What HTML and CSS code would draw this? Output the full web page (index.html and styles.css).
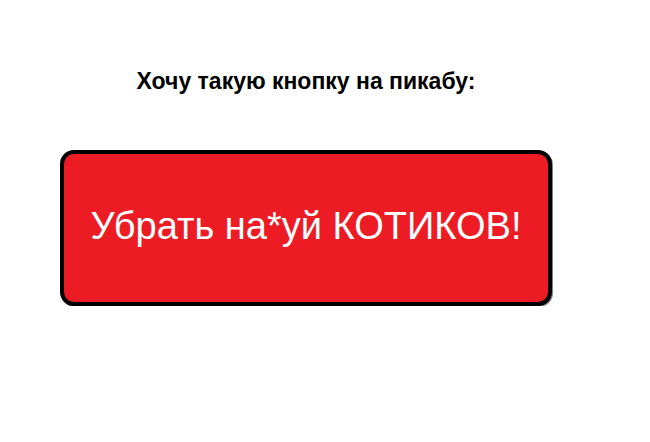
FILE: index.html
```html
<!DOCTYPE html>
<html lang="ru">
<head>
    <meta charset="UTF-8">
    <meta name="viewport" content="width=device-width, initial-scale=1.0">
    <title>Кнопка для пикабу</title>
    <link rel="stylesheet" href="styles.css">
</head>
<body>
    <div class="container">
        <h1>Хочу такую кнопку на пикабу:</h1>
        <button class="big-button">Убрать на*уй КОТИКОВ!</button>
    </div>
</body>
</html>
```

FILE: styles.css
```css
body {
    background-color: #ffffff;
    color: #000000;
    font-family: "Liberation Sans", Arial, sans-serif;
    margin: 0;
    padding: 0;
}

.container {
    width: 492px;
    margin-left: 60px;
    padding-top: 68px;
    display: flex;
    flex-direction: column;
    align-items: center;
}

h1 {
    font-size: 23px;
    font-weight: bold;
    line-height: 26px;
    margin: 0 0 56px 0;
}

.big-button {
    width: 492px;
    height: 156px;
    box-sizing: border-box;
    background-color: #ed1c24;
    color: #ffffff;
    border: 4px solid #000000;
    border-radius: 14px;
    box-shadow: 1px 1px 0 #7f7f7f;
    font-family: "Liberation Sans", Arial, sans-serif;
    font-size: 38px;
    padding: 0 0 4px 0;
    cursor: pointer;
}
```
